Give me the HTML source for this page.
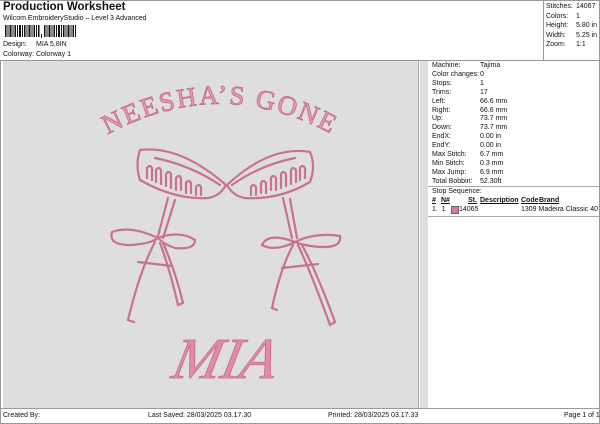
<!DOCTYPE html>
<html><head><meta charset="utf-8"><style>
body{margin:0;width:600px;height:424px;background:#fff;font-family:"Liberation Sans",sans-serif;font-size:7px;color:#111;position:relative;overflow:hidden}
.a{position:absolute;white-space:nowrap}
</style></head><body>
<div class="a" style="left:3px;top:1px;font-size:11.5px;font-weight:bold">Production Worksheet</div>
<div class="a" style="left:3px;top:15px">Wilcom EmbroideryStudio – Level 3 Advanced</div>
<svg class="a" style="left:5px;top:25px" width="80" height="14">
<g fill="#111">
<rect x="0" y="0" width="1.5" height="12"/><rect x="2.5" y="0" width="1" height="12"/><rect x="4.5" y="0" width="2" height="12"/><rect x="7.5" y="0" width="1" height="12"/><rect x="9.5" y="0" width="1.5" height="12"/><rect x="12" y="0" width="1" height="12"/><rect x="14" y="0" width="2" height="12"/><rect x="17" y="0" width="1" height="12"/><rect x="19" y="0" width="1.5" height="12"/><rect x="21.5" y="0" width="1" height="12"/><rect x="23.5" y="0" width="2" height="12"/><rect x="26.5" y="0" width="1" height="12"/><rect x="28.5" y="0" width="1.5" height="12"/><rect x="31" y="0" width="1" height="12"/><rect x="33" y="0" width="1.5" height="12"/>
<rect x="36" y="9" width="1" height="4"/>
<rect x="39" y="0" width="1.5" height="12"/><rect x="41.5" y="0" width="1" height="12"/><rect x="43.5" y="0" width="2" height="12"/><rect x="46.5" y="0" width="1" height="12"/><rect x="48.5" y="0" width="1.5" height="12"/><rect x="51" y="0" width="1" height="12"/><rect x="53" y="0" width="2" height="12"/><rect x="56" y="0" width="1" height="12"/><rect x="58" y="0" width="1.5" height="12"/><rect x="60.5" y="0" width="1" height="12"/><rect x="62.5" y="0" width="2" height="12"/><rect x="65.5" y="0" width="1" height="12"/><rect x="67.5" y="0" width="1.5" height="12"/><rect x="70" y="0" width="1" height="12"/>
</g></svg>
<div class="a" style="left:3px;top:41px">Design:</div><div class="a" style="left:36px;top:41px">MIA 5,8IN</div>
<div class="a" style="left:3px;top:51px">Colorway:</div><div class="a" style="left:36px;top:51px">Colorway 1</div>
<div class="a" style="left:0;top:0;width:600px;height:1px;background:#999"></div>
<div class="a" style="left:543px;top:0;width:1px;height:60px;background:#999"></div>
<div class="a" style="left:0;top:60px;width:600px;height:1px;background:#999"></div>
<div class="a" style="left:546px;top:2px;line-height:9.5px">Stitches:<br>Colors:<br>Height:<br>Width:<br>Zoom:</div>
<div class="a" style="left:576px;top:2px;line-height:9.5px">14067<br>1<br>5.80 in<br>5.25 in<br>1:1</div>
<div class="a" style="left:3px;top:61px;width:415px;height:347px;background:#dedede"></div>
<div class="a" style="left:420px;top:61px;width:8px;height:347px;background:#dedede"></div>
<div class="a" style="left:418px;top:61px;width:1px;height:347px;background:#aaa"></div>
<div class="a" style="left:432px;top:62px;line-height:8.9px">Machine:<br>Color changes:<br>Stops:<br>Trims:<br>Left:<br>Right:<br>Up:<br>Down:<br>EndX:<br>EndY:<br>Max Stitch:<br>Min Stitch:<br>Max Jump:<br>Total Bobbin:</div>
<div class="a" style="left:480px;top:62px;line-height:8.9px">Tajima<br>0<br>1<br>17<br>66.6 mm<br>66.6 mm<br>73.7 mm<br>73.7 mm<br>0.00 in<br>0.00 in<br>6.7 mm<br>0.3 mm<br>6.9 mm<br>52.30ft</div>
<div class="a" style="left:428px;top:186px;width:172px;height:1px;background:#aaa"></div>
<div class="a" style="left:432px;top:188px">Stop Sequence:</div>
<div class="a" style="left:432px;top:197px;font-weight:bold;text-decoration:underline">#</div>
<div class="a" style="left:441px;top:197px;font-weight:bold;text-decoration:underline">N#</div>
<div class="a" style="left:468px;top:197px;font-weight:bold;text-decoration:underline">St.</div>
<div class="a" style="left:480px;top:197px;font-weight:bold;text-decoration:underline">Description</div>
<div class="a" style="left:521px;top:197px;font-weight:bold;text-decoration:underline">Code</div>
<div class="a" style="left:539px;top:197px;font-weight:bold;text-decoration:underline">Brand</div>
<div class="a" style="left:432px;top:206px">1.&nbsp;&nbsp;1</div>
<div class="a" style="left:451px;top:206px;width:6px;height:6px;background:#d67a9c;border:0.5px solid #666"></div>
<div class="a" style="left:459px;top:206px">14065</div>
<div class="a" style="left:521px;top:206px">1309 Madeira Classic 40</div>
<div class="a" style="left:428px;top:216px;width:172px;height:1px;background:#aaa"></div>
<div class="a" style="left:0;top:408px;width:600px;height:1px;background:#999"></div>
<div class="a" style="left:0;top:423px;width:600px;height:1px;background:#999"></div>
<div class="a" style="left:0;top:60px;width:1px;height:364px;background:#999"></div>
<div class="a" style="left:599px;top:0;width:1px;height:424px;background:#999"></div>
<div class="a" style="left:3px;top:412px">Created By:</div>
<div class="a" style="left:148px;top:412px">Last Saved: 28/03/2025 03.17.30</div>
<div class="a" style="left:328px;top:412px">Printed: 28/03/2025 03.17.33</div>
<div class="a" style="left:564px;top:412px">Page 1 of 1</div>
<svg class="a" style="left:0;top:0" width="418" height="408">
<defs><path id="arc" d="M82,150 Q220,58 358,150"/></defs>
<text font-family="Liberation Serif,serif" font-size="27" fill="#e59ab4" stroke="#c46a8a" stroke-width="0.8" letter-spacing="2"><textPath href="#arc" startOffset="50%" text-anchor="middle">NEESHA’S GONE</textPath></text>
<g fill="none" stroke="#c9728f" stroke-width="2.2" stroke-linecap="round">
<path d="M140,150 Q180,145 226,185 Q220,196 208,198 Q175,200 140,180 Q135,165 140,150Z"/>
<path d="M155,158 Q190,165 220,185"/>
<path d="M147,178 v-10 q3,-4 5,0 v12 M156,182 v-12 q3,-4 5,0 v14 M166,186 v-12 q3,-4 5,0 v14 M176,190 v-12 q3,-4 5,0 v12 M186,193 v-10 q3,-4 5,0 v10 M196,195 v-8 q3,-4 5,0 v8"/>
<path d="M168,198 L158,236 M175,200 L163,238"/>
<path d="M158,238 Q130,225 112,232 Q108,245 130,245 Q150,244 158,238 Q180,230 195,240 Q195,250 175,248 Q165,245 158,238Z"/>
<path d="M155,242 Q140,270 128,320 l6,2 M160,243 Q170,270 178,305 l5,-2 Q175,270 163,243"/>
<path d="M138,262 L172,266"/>
<path d="M310,152 Q270,145 227,185 Q233,196 245,198 Q280,200 310,182 Q316,166 310,152Z"/>
<path d="M295,158 Q260,165 232,185"/>
<path d="M305,178 v-10 q-3,-4 -5,0 v12 M296,182 v-12 q-3,-4 -5,0 v14 M286,186 v-12 q-3,-4 -5,0 v14 M276,190 v-12 q-3,-4 -5,0 v12 M266,193 v-10 q-3,-4 -5,0 v10 M256,195 v-8 q-3,-4 -5,0 v8"/>
<path d="M283,198 L292,238 M290,199 L297,238"/>
<path d="M295,242 Q268,232 262,245 Q275,252 295,242 Q315,232 340,236 Q342,248 320,247 Q305,246 295,242Z"/>
<path d="M293,245 Q280,270 272,308 l5,2 M298,245 Q312,275 330,325 l5,-3 Q318,275 302,245"/>
<path d="M282,268 L318,264"/>
</g>
<text x="222" y="378" text-anchor="middle" font-family="Liberation Serif,serif" font-style="italic" font-size="58" fill="#e08aa8" stroke="#c46a8a" stroke-width="0.8" transform="skewX(-12) translate(80,0)">MIA</text>
</svg>
</body></html>
